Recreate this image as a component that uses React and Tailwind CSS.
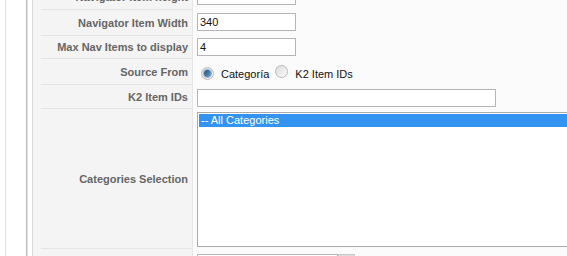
import React from 'react';

const font = { fontFamily: '"Liberation Sans", Arial, sans-serif' };

function Radio({ checked }) {
  return (
    <span className="relative inline-flex h-[13px] w-[13px] items-center justify-center rounded-full border border-[#b9b9b9] bg-gradient-to-br from-[#dcdcdc] to-[#fbfbfb]">
      {checked && (
        <span className="h-[7px] w-[7px] rounded-full bg-gradient-to-br from-[#1f4f7a] to-[#6fa3cf] shadow-[0_0_0_1px_#8fb4d6]" />
      )}
    </span>
  );
}

function Row({ label, h, children, last }) {
  return (
    <div className="flex" style={{ height: h }}>
      <div className="relative flex w-[159px] shrink-0 items-center justify-end bg-[#f4f4f4] pr-[4px] text-[11px] font-bold text-[#666]">
        <span>{label}</span>
        {!last && <div className="absolute bottom-0 left-[8px] right-0 h-px bg-[#e4e4e4]" />}
      </div>
      <div className="w-px shrink-0 bg-[#e6e6e6]" />
      <div className="flex min-w-0 flex-1 items-start bg-[#fbfbfb] pl-[4px]">{children}</div>
    </div>
  );
}

function TextInput({ value, w = 99 }) {
  return (
    <div
      className="flex h-[18px] items-center border border-[#b5b5b5] bg-white px-[2px] text-[11px] text-[#111]"
      style={{ width: w }}
    >
      {value}
    </div>
  );
}

export default function App() {
  return (
    <div className="flex h-[256px] w-[567px] overflow-hidden bg-white" style={font}>
      <div className="w-[5px]" />
      <div className="w-px bg-[#e2e2e2]" />
      <div className="w-[20px]" />
      <div className="w-px bg-[#bdbdbd]" />
      <div className="w-px bg-[#e4e4e4]" />
      <div className="w-[4px]" />
      <div className="w-px bg-[#d9d9d9]" />
      <div className="flex min-w-0 flex-1 flex-col">
        <div className="-mt-[16px] flex flex-col">
          <Row label="Navigator Item height" h={26}>
            <div className="mt-[3px]"><TextInput value="75" /></div>
          </Row>
          <Row label="Navigator Item Width" h={26}>
            <div className="mt-[3px]"><TextInput value="340" /></div>
          </Row>
          <Row label="Max Nav Items to display" h={23}>
            <div className="mt-[2px]"><TextInput value="4" /></div>
          </Row>
          <Row label="Source From" h={26}>
            <div className="ml-[4px] mt-[6px] flex items-center text-[11px] text-[#111]">
              <Radio checked />
              <span className="ml-[7px]">Categoría</span>
              <span className="ml-[6px]"><Radio /></span>
              <span className="ml-[7px]">K2 Item IDs</span>
            </div>
          </Row>
          <Row label="K2 Item IDs" h={24}>
            <div className="mt-[4px]"><TextInput value="" w={299} /></div>
          </Row>
          <Row label="Categories Selection" h={140}>
            <div className="mt-[3px] h-[135px] w-[400px] shrink-0 border border-[#aaa] bg-white p-px text-[11px]">
              <div className="bg-[#3393f0] pl-[2px] leading-[13px] text-white">-- All Categories</div>
            </div>
          </Row>
          <Row label="" h={30} last>
            <div className="mt-[5px] flex">
              <div className="h-[18px] w-[141px] border border-[#b5b5b5] bg-white" />
              <div className="h-[18px] w-[17px] border border-[#c8c8c8] bg-[#dcdcdc]" />
            </div>
          </Row>
        </div>
      </div>
    </div>
  );
}
